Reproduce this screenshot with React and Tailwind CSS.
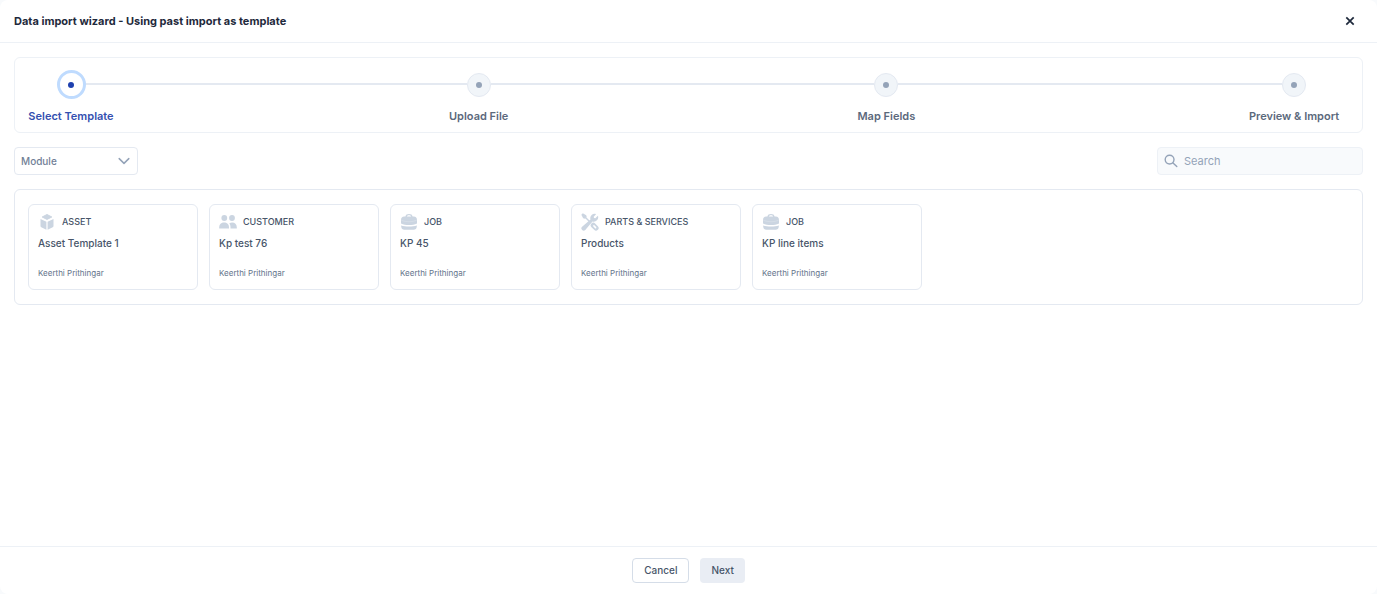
import React, { useState } from "react";

function AssetIcon() {
  return (
    <svg viewBox="0 0 18 18" className="size-[18px] shrink-0" fill="currentColor" aria-hidden="true">
      <path d="M9 1.5 13.800 4 9 6.400 4.200 4Z" stroke="currentColor" strokeWidth="1" strokeLinejoin="round" />
      <path d="M2.500 5.900 8.400 8.700v8L3.300 14.200a1.400 1.400 0 0 1-.8-1.300Z" />
      <path d="M15.500 5.900 9.600 8.700v8l5.100-2.500a1.400 1.400 0 0 0 .8-1.300Z" />
    </svg>
  );
}

function CustomerIcon() {
  return (
    <svg viewBox="0 0 18 18" className="size-[18px] shrink-0" fill="currentColor" aria-hidden="true">
      <circle cx="5.3" cy="5" r="2.9" />
      <circle cx="13" cy="5" r="2.9" />
      <path d="M0.2 15.6v-1.2c0-3 2.1-4.9 4.9-4.9s4.9 1.9 4.9 4.9v1.2Z" />
      <path d="M11.5 15.6h6.3v-1.4c0-2.9-2-4.7-4.6-4.7-1.2 0-2.2.3-3 .9 1 1 1.300 2.400 1.300 4Z" />
    </svg>
  );
}

function JobIcon() {
  return (
    <svg viewBox="0 0 18 18" className="size-[18px] shrink-0" fill="currentColor" aria-hidden="true">
      <path
        fillRule="evenodd"
        d="M5.400 3.400C5.700 1.700 6.900.9 9 .9s3.300.8 3.600 2.500h1.200c2 0 3.200 1.300 3.200 3.300v3.900c-2.300 1-5 1.500-8 1.500s-5.700-.5-8-1.500V6.700c0-2 1.200-3.300 3.200-3.300Zm1.500 0h4.200c-.3-.9-.9-1.200-2.100-1.200s-1.800.3-2.100 1.200Z"
      />
      <path d="M1 6.900c2.200 1.200 5 1.800 8 1.800s5.800-.6 8-1.800" fill="none" stroke="white" strokeWidth="0.5" opacity="0.4" />
      <path d="M1.100 12.400c2.300.8 5 1.100 7.900 1.100s5.600-.3 7.900-1.100l-.2 1.600c-.2 1.800-1.300 2.800-3.100 2.800H4.400c-1.800 0-2.900-1-3.100-2.800Z" />
    </svg>
  );
}

function PartsIcon() {
  return (
    <svg viewBox="0 0 18 18" className="size-[18px] shrink-0" fill="none" stroke="currentColor" aria-hidden="true">
      <path d="M.3 1.800 1.800.3l3.400 1.900.5 1.900-1.600 1.600-1.900-.5Z" fill="currentColor" stroke="none" />
      <path d="m4.500 4.500 5.500 5.500" strokeWidth="1.400" />
      <path d="m12.300 12.300 2.700 2.700" strokeWidth="5.200" strokeLinecap="round" />
      <path d="m12.900 12.900 1.700 1.700" stroke="white" strokeWidth="1.500" strokeLinecap="round" />
      <path
        d="M15.200 1.100a4.400 4.400 0 0 0-5.700 5.500L1.100 13.700a2.200 2.200 0 1 0 3.200 3.200l7.100-8.400a4.400 4.400 0 0 0 5.500-5.700l-2.600 2.500-1.300-.3-.3-1.300Z"
        fill="currentColor"
        stroke="none"
      />
    </svg>
  );
}

const steps = ["Select Template", "Upload File", "Map Fields", "Preview & Import"];

const templates = [
  { module: "ASSET", name: "Asset Template 1", author: "Keerthi Prithingar", Icon: AssetIcon },
  { module: "CUSTOMER", name: "Kp test 76", author: "Keerthi Prithingar", Icon: CustomerIcon },
  { module: "JOB", name: "KP 45", author: "Keerthi Prithingar", Icon: JobIcon },
  { module: "PARTS & SERVICES", name: "Products", author: "Keerthi Prithingar", Icon: PartsIcon },
  { module: "JOB", name: "KP line items", author: "Keerthi Prithingar", Icon: JobIcon },
];

function Stepper({ current }) {
  return (
    <ol className="flex rounded-md border border-[#edf1f6] pt-3 pr-5 pb-2 pl-2">
      {steps.map((label, i) => {
        const active = i === current;
        return (
          <React.Fragment key={label}>
            {i > 0 && <li aria-hidden="true" className="-mx-9 mt-[13px] h-0.5 flex-1 bg-[#e4e9f1]" />}
            <li
              aria-current={active ? "step" : undefined}
              className="flex w-24 shrink-0 flex-col items-center gap-[9px]"
            >
              <span className="z-10 flex h-[29px] items-center">
                <span
                  className={
                    active
                      ? "flex size-[29px] items-center justify-center rounded-full border-3 border-[#bfdbfe] bg-white"
                      : "flex size-6 items-center justify-center rounded-full border border-[#e4e9f1] bg-[#f1f5f9]"
                  }
                >
                  <span className={active ? "size-1.5 rounded-full bg-[#1e40af]" : "size-1.5 rounded-full bg-[#94a3b8]"} />
                </span>
              </span>
              <span
                className={
                  active
                    ? "text-[11px] leading-4 font-semibold whitespace-nowrap text-[#3450b0]"
                    : "text-[11px] leading-4 font-semibold whitespace-nowrap text-[#5b697c]"
                }
              >
                {label}
              </span>
            </li>
          </React.Fragment>
        );
      })}
    </ol>
  );
}

function TemplateCard({ module, name, author, Icon }) {
  return (
    <button
      type="button"
      className="flex w-[170px] flex-col items-start rounded-md border border-[#e4e9f1] bg-white px-[9px] pt-2 pb-2.5 text-left"
    >
      <span className="flex items-center gap-1.5 text-[#cbd5e1]">
        <Icon />
        <span className="text-[9px] leading-[18px] font-medium text-[#475569]">{module}</span>
      </span>
      <span className="mt-1 text-[10px] leading-4 font-medium text-[#475569]">{name}</span>
      <span className="mt-4 text-[8px] leading-3 text-[#64748b]">{author}</span>
    </button>
  );
}

export default function App() {
  const [query, setQuery] = useState("");
  const visible = templates.filter((t) => t.name.toLowerCase().includes(query.toLowerCase()));

  return (
    <div className="min-h-screen bg-[#f8fafc] font-['Inter',sans-serif]">
      <div className="flex min-h-screen flex-col rounded-lg bg-white">
        <header className="flex h-[43px] items-center justify-between border-b border-[#edf1f6] pr-5 pl-3.5">
          <h1 className="text-[11px] leading-4 font-bold text-[#1e293b]">
            Data import wizard - Using past import as template
          </h1>
          <button type="button" aria-label="Close" className="flex size-3.5 items-center justify-center text-[#1e293b]">
            <svg viewBox="0 0 14 14" className="size-3.5" fill="none" stroke="currentColor" strokeWidth="1.700" aria-hidden="true">
              <path d="m3.300 3.300 7.400 7.400M10.700 3.300l-7.400 7.400" />
            </svg>
          </button>
        </header>

        <main className="flex flex-1 flex-col gap-3.5 p-3.5">
          <Stepper current={0} />

          <div className="flex items-center justify-between">
            <div className="relative flex">
              <select
                aria-label="Module"
                defaultValue=""
                className="h-7 w-[124px] appearance-none rounded-sm border border-[#e4e9f1] bg-white px-1.5 text-[10px] font-medium text-[#718096]"
              >
                <option value="">Module</option>
                <option>Asset</option>
                <option>Customer</option>
                <option>Job</option>
              </select>
              <svg
                viewBox="0 0 12 12"
                className="pointer-events-none absolute top-2 right-2 size-3 text-[#94a3b8]"
                fill="none"
                stroke="currentColor"
                strokeWidth="1.500"
                strokeLinecap="round"
                strokeLinejoin="round"
                aria-hidden="true"
              >
                <path d="m1.200 3.600 4.800 4.800 4.800-4.800" />
              </svg>
            </div>
            <div className="relative flex">
              <svg
                viewBox="0 0 14 14"
                className="pointer-events-none absolute top-[7px] left-[7px] size-3.5 text-[#94a3b8]"
                fill="none"
                stroke="currentColor"
                strokeWidth="1.400"
                strokeLinecap="round"
                aria-hidden="true"
              >
                <circle cx="5.600" cy="5.600" r="4.400" />
                <path d="m9 9 3.800 3.600" />
              </svg>
              <input
                type="search"
                aria-label="Search"
                placeholder="Search"
                value={query}
                onChange={(e) => setQuery(e.target.value)}
                className="h-7 w-[206px] rounded-sm border border-[#edf1f6] bg-[#f8fafc] pr-2 pl-[26px] text-[11px] text-[#475569] placeholder:text-[#94a3b8]"
              />
            </div>
          </div>

          <section
            aria-label="Templates"
            className="flex flex-wrap gap-[11px] rounded-md border border-[#e4e9f1] px-[13px] py-3.5"
          >
            {visible.map((t) => (
              <TemplateCard key={t.name} {...t} />
            ))}
          </section>
        </main>

        <footer className="flex h-12 items-center justify-center gap-[11px] border-t border-[#edf1f6]">
          <button type="button" className="h-[25px] rounded-sm border border-[#d5dde8] bg-white px-[11px] text-[10px] font-medium text-[#475569]">
            Cancel
          </button>
          <button type="button" className="h-[25px] rounded-sm bg-[#e9edf4] px-[11px] text-[10px] font-medium text-[#475569]">
            Next
          </button>
        </footer>
      </div>
    </div>
  );
}
